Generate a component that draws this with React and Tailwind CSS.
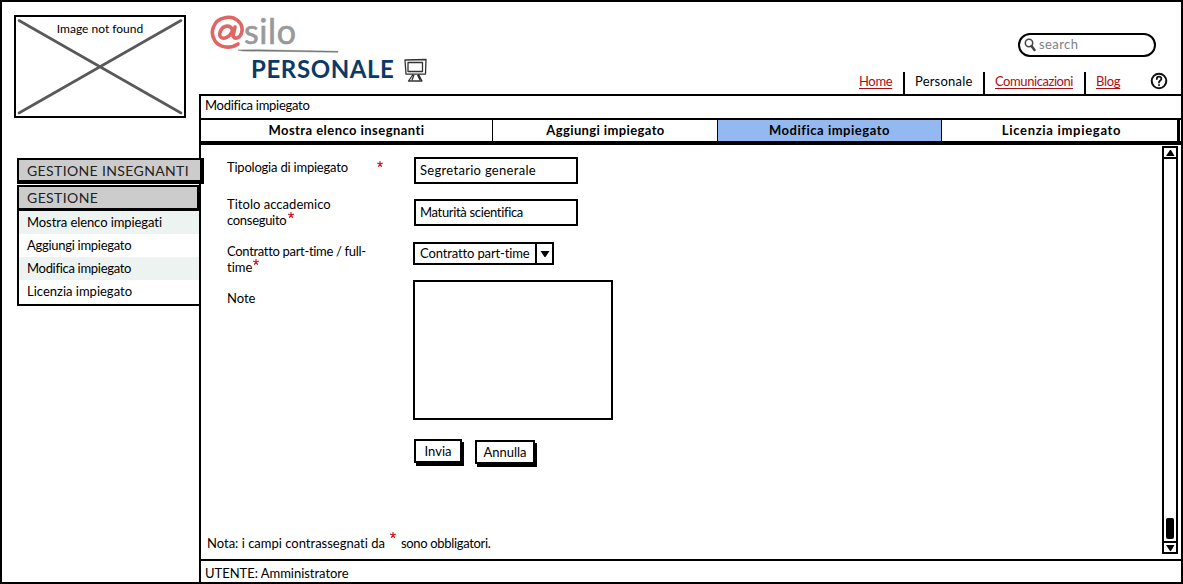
import React from "react";

const Star = ({ className = "" }) => (
  <svg viewBox="0 0 6 6" className={`h-[6px] w-[6px] shrink-0 ${className}`} fill="none" stroke="#d9161c" strokeWidth="1.2" strokeLinecap="round">
    <path d="M3 3V.5M3 3 .6 2.2M3 3l2.4-.8M3 3 1.5 5.3M3 3l1.5 2.3" />
  </svg>
);

const tabs = [
  { label: "Mostra elenco insegnanti", cls: "w-[292px] tracking-[0.45px] border-r" },
  { label: "Aggiungi impiegato", cls: "w-[225px] pl-[1px] tracking-[0.38px] border-r" },
  { label: "Modifica impiegato", cls: "w-[224px] tracking-[0.52px] bg-[#94b9f1] border-r" },
  { label: "Licenzia impiegato", cls: "w-[238px] pl-[4px] tracking-[0.7px] border-r-[3px]" },
];

function Sidebar() {
  return (
    <aside className="w-[197px] shrink-0 pl-[12px] pt-[13px]">
      <div className="relative h-[103px] w-[172px] border-2 border-black text-center">
        <svg className="absolute inset-0 h-full w-full" viewBox="0 0 168 99" fill="none" stroke="#595959" strokeWidth="2.6" strokeLinecap="round">
          <path d="M3 3.5 165 96M165 3.5 3 96" />
        </svg>
        <span className="relative block pt-[4px] text-[12px] leading-[16px]">Image not found</span>
      </div>
      <nav className="relative z-10 mt-[40px] ml-[3px] w-[184px]">
        <div className="flex h-[26px] w-[187px] items-center border-t-2 border-r-4 border-b-4 border-l-2 border-black bg-[#cccccc] pt-[1px] pl-[8px] text-[14px] tracking-[0.37px] whitespace-nowrap text-[#222]">
          GESTIONE INSEGNANTI
        </div>
        <div className="mt-[1px] flex h-[26px] w-[183px] items-center border-t-2 border-r-[3px] border-b-[3px] border-l-2 border-black bg-[#cccccc] pl-[8px] text-[14px] tracking-[0.4px] text-[#222]">
          GESTIONE
        </div>
        <ul className="h-[95px] border-x-2 border-b-2 border-black bg-white text-[13px] leading-[23px]">
          <li className="h-[23px] bg-[#edf3f0] pl-[8px] tracking-[-0.08px]">Mostra elenco impiegati</li>
          <li className="h-[23px] pl-[8px] tracking-[-0.28px]">Aggiungi impiegato</li>
          <li className="h-[23px] bg-[#edf3f0] pl-[8px] tracking-[-0.3px]">Modifica impiegato</li>
          <li className="h-[23px] pl-[8px]">Licenzia impiegato</li>
        </ul>
      </nav>
    </aside>
  );
}

function Header() {
  return (
    <header className="flex h-[92px] justify-between">
      <div className="pl-[11px] pt-[11px]">
        <div className="flex h-[36px] items-center leading-[36px]">
          <svg viewBox="0 0 34 34" className="mt-[1px] h-[34px] w-[34px]" fill="none" stroke="#e06666" strokeLinecap="round">
            <path d="M28 29c-7 5-18 4-23-3C-1 17 4 5 14 3c11-3 19 5 18 13-1 7-7 9-9 5l2-9" strokeWidth="3.6" />
            <path d="M22 14c-2-4-8-4-11 1-3 6 0 9 4 8 4-1 7-5 8-9" strokeWidth="3.6" />
          </svg>
          <span className="text-[34px] tracking-[0.6px] text-[#999999] [-webkit-text-stroke:0.6px_#999999]">silo</span>
        </div>
        <svg viewBox="0 0 102 4" className="ml-[28px] h-[4px] w-[102px]"><path d="M0 1 20 .8 100 2.3v1L50 2.5 5 2Z" fill="#777" stroke="#777" strokeWidth=".5" /></svg>
        <div className="flex h-[32px] items-center pl-[41px]">
          <h1 className="w-[143px] text-[24px] leading-[32px] font-bold tracking-[0.6px] text-[#0b3a69]">PERSONALE</h1>
          <svg viewBox="0 0 24 26" className="mt-[2px] ml-[10px] h-[26px] w-[24px]" fill="none" stroke="#333" strokeWidth="1.3" strokeLinejoin="round">
            <path d="M1 3 22 2.500 21.500 17 2 17.200ZM4 5.500h14.500v9H4ZM9 17.500 4.500 24H18L14.500 17.500M10 18 8 23M13.500 18l2.500 5" />
          </svg>
        </div>
      </div>
      <div className="flex w-[323px] flex-col pt-[31px]">
        <div className="ml-[160px] flex h-[24px] w-[138px] items-center rounded-full border-2 border-black pl-[4px] text-[13px] leading-[18px] tracking-[0.4px] text-[#808088]">
          <svg viewBox="0 0 12 14" className="mr-[3px] h-[14px] w-[12px]" fill="none" stroke="#444">
            <circle cx="5" cy="5" r="3.700" strokeWidth="1.500" />
            <path d="m7.500 8 3 4" strokeWidth="2.500" strokeLinecap="round" />
          </svg>
          <span className="pb-[2px]">search</span>
        </div>
        <div className="mt-[15px] flex h-[22px] text-[13px] leading-[19px]">
          <span className="w-[45px] pl-[1px]"><a className="tracking-[-0.35px] text-[#b00c12] underline underline-offset-2">Home</a></span>
          <span className="w-[80px] border-l-2 border-black pl-[10px] tracking-[0.2px]">Personale</span>
          <span className="w-[101px] border-l-2 border-black pl-[10px]"><a className="tracking-[-0.43px] text-[#b00c12] underline underline-offset-2">Comunicazioni</a></span>
          <span className="w-[66px] border-l-2 border-black pl-[10px]"><a className="tracking-[-0.3px] text-[#b00c12] underline underline-offset-2">Blog</a></span>
          <svg viewBox="0 0 18 18" className="h-[18px] w-[18px]" fill="none" stroke="#111" strokeWidth="2" strokeLinecap="round">
            <circle cx="9" cy="9" r="7.300" />
            <path d="M6.800 7c0-3 4.600-3 4.600-.3C11.400 8.500 9 8.500 9 10.500M9 13v.2" strokeWidth="1.800" />
          </svg>
        </div>
      </div>
    </header>
  );
}

function Form() {
  return (
    <div className="flex h-[414px] justify-between">
      <div className="flex w-[430px] flex-col pl-[6px] pt-[12px] text-[13px]">
        <div className="grid grid-cols-[187px_1fr] pl-[20px]">
          <div className="flex h-[42px] leading-[20px]">
            <span className="w-[150px] tracking-[-0.21px]">Tipologia di impiegato</span>
            <Star className="mt-[4px]" />
          </div>
          <div className="flex h-[27px] w-[164px] items-center border-2 border-black pl-[4px] tracking-[0.3px]">Segretario generale</div>
          <div className="-mt-[3px] h-[46px] leading-[16px]">
            <div className="tracking-[0.03px]">Titolo accademico</div>
            <div className="flex"><span className="tracking-[-0.3px]">conseguito</span><Star className="ml-[2px]" /></div>
          </div>
          <div className="flex h-[27px] w-[164px] items-center border-2 border-black pl-[4px] tracking-[-0.33px]">Maturità scientifica</div>
          <div className="h-[51px] pt-[1px] leading-[16px]">
            <div className="tracking-[-0.32px]">Contratto part-time / full-</div>
            <div className="flex"><span>time</span><Star className="ml-[1px]" /></div>
          </div>
          <div className="-ml-[1px] flex h-[23px] w-[141px] items-stretch border-2 border-black pl-[5px] leading-[18px]">
            <span className="w-[115px] tracking-[-0.13px] whitespace-nowrap">Contratto part-time</span>
            <span className="flex flex-1 items-center justify-center border-l-2 border-black">
              <svg viewBox="0 0 10 8" className="h-[8px] w-[10px]"><path d="M.5 1h9L5.500 7h-1Z" /></svg>
            </span>
          </div>
          <div className="-mt-[5px] leading-[20px]">Note</div>
          <div className="-mt-[13px] -ml-[1px] h-[140px] w-[200px] border-2 border-black" />
        </div>
        <div className="mt-[19px] flex items-start pl-[207px] leading-[20px]">
          <button className="h-[24px] w-[48px] border-2 border-black bg-white shadow-[2px_3px_0_#000]">Invia</button>
          <button className="mt-[1px] ml-[13px] h-[24px] w-[60px] border-2 border-black bg-white shadow-[2px_3px_0_#000]">Annulla</button>
        </div>
        <div className="mt-auto mb-[5px] flex whitespace-nowrap leading-[22px]">
          <span>Nota: i campi contrassegnati da</span>
          <Star className="mr-[5px] ml-[5px]" />
          <span className="tracking-[-0.33px]">sono obbligatori.</span>
        </div>
      </div>
      <div className="mt-[1px] mr-[3px] flex h-[408px] w-[16px] flex-col border-2 border-black">
        <svg viewBox="0 0 12 9" className="h-[9px] w-[12px]"><path d="M2 8h8.500L7 2H6Z" /></svg>
        <div className="flex flex-1 flex-col justify-end border-y-2 border-black px-[2px] pb-[2px]"><div className="h-[21px] rounded-[2px] bg-black" /></div>
        <svg viewBox="0 0 12 9" className="h-[9px] w-[12px]"><path d="M2 2h8.500L7 8H6Z" /></svg>
      </div>
    </div>
  );
}

export default function App() {
  return (
    <div className="flex h-[584px] w-[1183px] border-2 border-black bg-white font-['Lato','Open_Sans',sans-serif] text-black [font-variant-ligatures:none]">
      <Sidebar />
      <div className="flex min-w-0 flex-1 flex-col">
        <Header />
        <main className="flex flex-1 flex-col border-t-2 border-l-2 border-black">
          <div className="h-[22px] pl-[4px] text-[13px] leading-[19px] tracking-[-0.28px]">Modifica impiegato</div>
          <div className="flex h-[27px] border-t-2 border-b-4 border-black text-[13px] font-bold">
            {tabs.map((t) => (
              <div key={t.label} className={`flex shrink-0 items-center justify-center border-black ${t.cls}`}>{t.label}</div>
            ))}
          </div>
          <Form />
          <footer className="flex-1 border-t-2 border-black pl-[4px] text-[13px] leading-[24px] tracking-[-0.03px]">UTENTE: Amministratore</footer>
        </main>
      </div>
    </div>
  );
}
